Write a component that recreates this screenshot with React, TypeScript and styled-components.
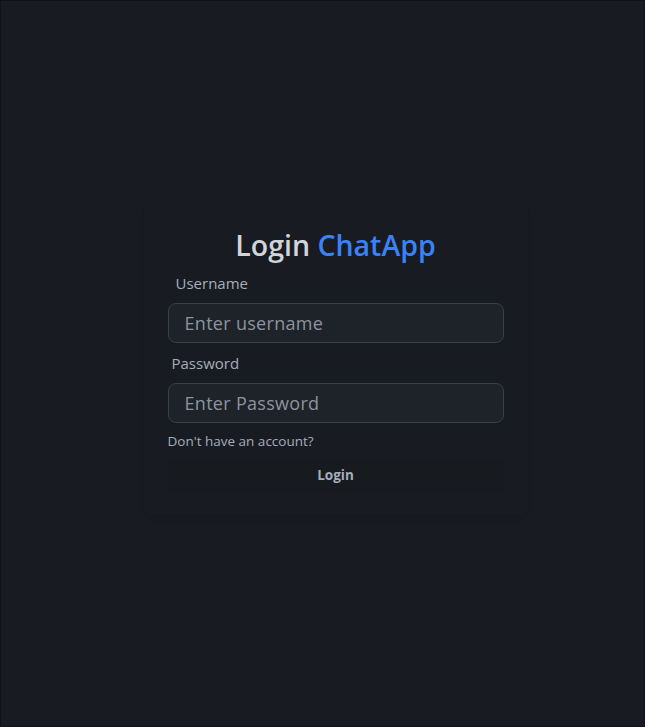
import styled, { createGlobalStyle } from 'styled-components';

const GlobalStyle = createGlobalStyle`
  html, body {
    margin: 0;
    padding: 0;
    background: #181c22;
  }
  body {
    font-family: 'Open Sans', 'Noto Sans', sans-serif;
    color: #a6adbb;
  }
  * { box-sizing: border-box; }
`;

const Page = styled.div`
  height: 727px;
  border: 1px solid #0f1216;
  padding: 0 0 10px 26px;
  display: flex;
  align-items: center;
  justify-content: center;
`;

const Card = styled.div`
  width: 384px;
  padding: 24px;
  border-radius: 8px;
  background: rgba(255, 255, 255, 0.004);
  box-shadow: 0 4px 6px -1px rgba(0, 0, 0, 0.06), 0 2px 4px -2px rgba(0, 0, 0, 0.05);
`;

const Title = styled.h1`
  margin: 0;
  font-size: 28.5px;
  line-height: 36px;
  font-weight: 600;
  text-align: center;
  color: #d1d5db;
`;

const Accent = styled.span`
  color: #3b82f6;
`;

const Form = styled.form`
  display: flex;
  flex-direction: column;
`;

const Label = styled.label<{ $padX: number }>`
  display: flex;
  align-items: center;
  padding: 8px ${(p) => p.$padX}px;
  height: 40px;
  font-size: 15px;
  line-height: 24px;
  color: #a6adbb;
`;

const Input = styled.input`
  width: 100%;
  height: 40px;
  padding: 0 16px;
  border: 1px solid #3a4048;
  border-radius: 8px;
  background: #1e232a;
  color: #a6adbb;
  font-family: inherit;
  font-size: 18px;
  letter-spacing: 0.3px;
  outline: none;

  &::placeholder {
    color: #8d939e;
  }
`;

const Link = styled.a`
  display: inline-block;
  margin-top: 8px;
  font-size: 13.5px;
  line-height: 20px;
  color: #a6adbb;
  text-decoration: none;
  align-self: flex-start;
`;

const Button = styled.button`
  margin-top: 8px;
  width: 100%;
  height: 32px;
  border: none;
  border-radius: 8px;
  background: #171b20;
  color: #a6adbb;
  font-family: inherit;
  font-size: 13.5px;
  font-weight: 700;
`;

export default function App() {
  return (
    <>
      <GlobalStyle />
      <Page>
        <Card>
          <Title>
            Login <Accent>ChatApp</Accent>
          </Title>
          <Form onSubmit={(e) => e.preventDefault()}>
            <Label $padX={8}>Username</Label>
            <Input placeholder="Enter username" />
            <Label $padX={4}>Password</Label>
            <Input type="password" placeholder="Enter Password" />
            <Link href="#">Don't have an account?</Link>
            <Button type="submit">Login</Button>
          </Form>
        </Card>
      </Page>
    </>
  );
}
